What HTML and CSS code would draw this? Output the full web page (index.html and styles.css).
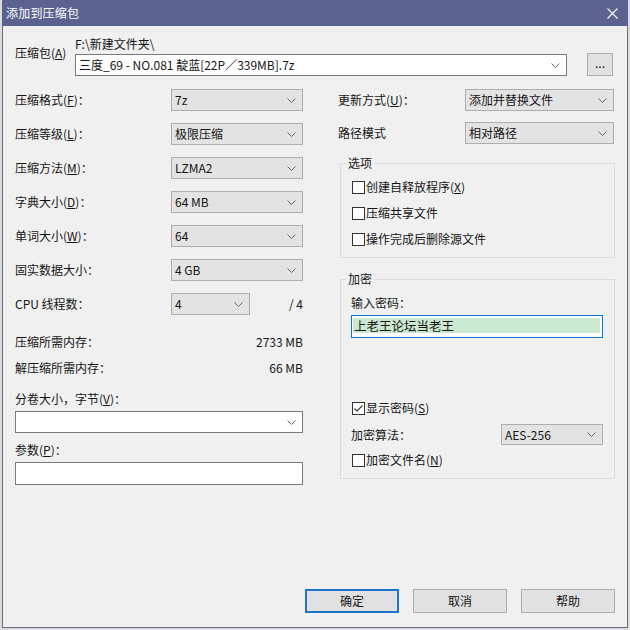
FILE: index.html
```html
<!DOCTYPE html>
<html lang="zh-CN">
<head>
<meta charset="utf-8">
<title>添加到压缩包</title>
<link rel="stylesheet" href="styles.css">
</head>
<body>
<div class="win">
  <div class="titlebar">
    <span class="title">添加到压缩包</span>
    <svg class="close" width="11" height="11" viewBox="0 0 11 11"><path d="M0.5 0.5L10.5 10.5M10.5 0.5L0.5 10.5" stroke="#ffffff" stroke-width="1.1" fill="none"/></svg>
  </div>
  <div class="content">
    <div class="archive">
      <div class="archive-label">压缩包(<u>A</u>)</div>
      <div class="archive-main">
        <div class="path">F:\新建文件夹\</div>
        <div class="combo edit">
          <span>三度_69 - NO.081 靛蓝[22P／339MB].7z</span>
          <svg class="chev" width="9" height="5" viewBox="0 0 9 5"><path d="M0.5 0.5L4.5 4.5L8.5 0.5" fill="none" stroke="#666" stroke-width="1"/></svg>
        </div>
      </div>
      <div class="btn browse">...</div>
    </div>

    <div class="columns">
      <div class="left">
        <div class="row"><span class="lbl">压缩格式(<u>F</u>)：</span><div class="combo sel"><span>7z</span><svg class="chev" width="9" height="5" viewBox="0 0 9 5"><path d="M0.5 0.5L4.5 4.5L8.5 0.5" fill="none" stroke="#666" stroke-width="1"/></svg></div></div>
        <div class="row"><span class="lbl">压缩等级(<u>L</u>)：</span><div class="combo sel"><span>极限压缩</span><svg class="chev" width="9" height="5" viewBox="0 0 9 5"><path d="M0.5 0.5L4.5 4.5L8.5 0.5" fill="none" stroke="#666" stroke-width="1"/></svg></div></div>
        <div class="row"><span class="lbl">压缩方法(<u>M</u>)：</span><div class="combo sel"><span>LZMA2</span><svg class="chev" width="9" height="5" viewBox="0 0 9 5"><path d="M0.5 0.5L4.5 4.5L8.5 0.5" fill="none" stroke="#666" stroke-width="1"/></svg></div></div>
        <div class="row"><span class="lbl">字典大小(<u>D</u>)：</span><div class="combo sel"><span>64 MB</span><svg class="chev" width="9" height="5" viewBox="0 0 9 5"><path d="M0.5 0.5L4.5 4.5L8.5 0.5" fill="none" stroke="#666" stroke-width="1"/></svg></div></div>
        <div class="row"><span class="lbl">单词大小(<u>W</u>)：</span><div class="combo sel"><span>64</span><svg class="chev" width="9" height="5" viewBox="0 0 9 5"><path d="M0.5 0.5L4.5 4.5L8.5 0.5" fill="none" stroke="#666" stroke-width="1"/></svg></div></div>
        <div class="row"><span class="lbl">固实数据大小：</span><div class="combo sel"><span>4 GB</span><svg class="chev" width="9" height="5" viewBox="0 0 9 5"><path d="M0.5 0.5L4.5 4.5L8.5 0.5" fill="none" stroke="#666" stroke-width="1"/></svg></div></div>
        <div class="row cpu"><span class="lbl">CPU 线程数：</span><div class="combo sel short"><span>4</span><svg class="chev" width="9" height="5" viewBox="0 0 9 5"><path d="M0.5 0.5L4.5 4.5L8.5 0.5" fill="none" stroke="#666" stroke-width="1"/></svg></div><span class="threads">/ 4</span></div>

        <div class="mem first"><span>压缩所需内存：</span><span>2733 MB</span></div>
        <div class="mem"><span>解压缩所需内存：</span><span>66 MB</span></div>

        <div class="flabel">分卷大小，字节(<u>V</u>)：</div>
        <div class="combo edit wide"><span></span><svg class="chev" width="9" height="5" viewBox="0 0 9 5"><path d="M0.5 0.5L4.5 4.5L8.5 0.5" fill="none" stroke="#666" stroke-width="1"/></svg></div>
        <div class="flabel second">参数(<u>P</u>)：</div>
        <div class="textbox"></div>
      </div>

      <div class="right">
        <div class="rrow first"><span class="rlbl">更新方式(<u>U</u>)：</span><div class="combo sel rsel"><span>添加并替换文件</span><svg class="chev" width="9" height="5" viewBox="0 0 9 5"><path d="M0.5 0.5L4.5 4.5L8.5 0.5" fill="none" stroke="#666" stroke-width="1"/></svg></div></div>
        <div class="rrow"><span class="rlbl">路径模式</span><div class="combo sel rsel"><span>相对路径</span><svg class="chev" width="9" height="5" viewBox="0 0 9 5"><path d="M0.5 0.5L4.5 4.5L8.5 0.5" fill="none" stroke="#666" stroke-width="1"/></svg></div></div>

        <fieldset class="group opts">
          <legend>选项</legend>
          <div class="cb"><span class="box"></span><span>创建自释放程序(<u>X</u>)</span></div>
          <div class="cb"><span class="box"></span><span>压缩共享文件</span></div>
          <div class="cb"><span class="box"></span><span>操作完成后删除源文件</span></div>
        </fieldset>

        <fieldset class="group enc">
          <legend>加密</legend>
          <div class="pwlabel">输入密码：</div>
          <div class="pw"><div class="sel-hl">上老王论坛当老王</div></div>
          <div class="cb small show"><span class="box"><svg width="11" height="11" viewBox="0 0 11 11"><path d="M1.5 5.5L4 8L9.5 2.5" fill="none" stroke="#333" stroke-width="1.1"/></svg></span><span>显示密码(<u>S</u>)</span></div>
          <div class="algo"><span>加密算法：</span><div class="combo sel asel"><span>AES-256</span><svg class="chev" width="9" height="5" viewBox="0 0 9 5"><path d="M0.5 0.5L4.5 4.5L8.5 0.5" fill="none" stroke="#666" stroke-width="1"/></svg></div></div>
          <div class="cb small names"><span class="box"></span><span>加密文件名(<u>N</u>)</span></div>
        </fieldset>
      </div>
    </div>

    <div class="buttons">
      <div class="btn act default">确定</div>
      <div class="btn act">取消</div>
      <div class="btn act">帮助</div>
    </div>
  </div>
</div>
</body>
</html>
```

FILE: styles.css
```css
* { box-sizing: border-box; }
html, body { margin: 0; padding: 0; }
body {
  width: 630px;
  height: 630px;
  overflow: hidden;
  background: #dcdcdc;
  font-family: "Noto Sans CJK SC", "Microsoft YaHei", sans-serif;
  font-size: 12px;
  line-height: 16px;
  color: #151515;
}
u { text-decoration: underline; text-underline-offset: 1px; }

.win {
  margin-left: 2px;
  width: 626px;
  height: 628px;
  display: flex;
  flex-direction: column;
}
.titlebar {
  height: 26px;
  flex: none;
  background: #5b628f;
  color: #fff;
  display: flex;
  align-items: center;
  justify-content: space-between;
  padding: 0 10px 0 4px;
}
.title { font-size: 12px; letter-spacing: 0.2px; }
.close { display: block; }

.content {
  flex: 1;
  background: #f0f0f0;
  border: 1px solid #6c6e80;
  border-top: none;
  padding: 10px 11px 14px 12px;
  display: flex;
  flex-direction: column;
}

.archive { display: flex; align-items: flex-start; }
.archive-label { width: 60px; margin-top: 9px; }
.archive-main { width: 492px; }
.path { height: 16px; }

.combo {
  display: flex;
  align-items: center;
  justify-content: space-between;
  height: 22px;
  padding: 0 6px 0 3px;
  white-space: nowrap;
}
.combo .chev { flex: none; display: block; }
.combo.edit {
  background: #fff;
  border: 1px solid #7a7a7a;
}
.archive .combo.edit { margin-top: 2px; padding-left: 3px; }

.btn {
  background: #e1e1e1;
  border: 1px solid #adadad;
  display: flex;
  align-items: center;
  justify-content: center;
}
.browse {
  margin-left: 20px;
  margin-top: 17px;
  width: 26px;
  height: 23px;
  padding-bottom: 3px;
}

.columns { display: flex; margin-top: 13px; }
.left { width: 288px; }
.right { width: 277px; margin-left: 35px; }

.row { display: flex; align-items: center; height: 22px; margin-bottom: 12px; }
.row.cpu { margin-bottom: 19px; }
.lbl { width: 156px; }
.combo.sel {
  width: 132px;
  background: #e3e3e3;
  border: 1px solid #adadad;
}
.combo.sel.short { width: 79px; }
.threads { margin-left: auto; }

.mem { display: flex; justify-content: space-between; height: 16px; }
.mem.first { margin-bottom: 10px; }

.flabel { margin-top: 15px; height: 16px; }
.flabel.second { margin-top: 9px; }
.combo.edit.wide { margin-top: 4px; width: 288px; }
.textbox {
  margin-top: 4px;
  height: 23px;
  background: #fff;
  border: 1px solid #7a7a7a;
}

.rrow { display: flex; align-items: center; height: 22px; }
.rrow.first { margin-bottom: 11px; }
.rlbl { width: 127px; }
.combo.rsel { width: 149px; }

.group {
  margin: 11px 0 0 2px;
  width: 275px;
  min-width: 0;
  border: 1px solid #dcdcdc;
  padding: 3px 10px 5px 10px;
}
.group legend {
  padding: 0 2px;
  margin-left: -5px;
  line-height: 16px;
}
.group.enc { margin-top: 13px; padding-top: 8px; padding-bottom: 8px; }

.cb { display: flex; align-items: center; height: 26px; }
.cb.small { height: 20px; }
.cb .box {
  width: 13px;
  height: 13px;
  margin: 0 1px 0 1px;
  background: #fff;
  border: 1px solid #333;
  flex: none;
  display: flex;
  align-items: center;
  justify-content: center;
}
.cb .box svg { display: block; }

.pwlabel { height: 16px; }
.pw {
  margin-top: 4px;
  width: 252px;
  height: 23px;
  background: #fff;
  border: 1px solid #0078d7;
  padding: 2px 2px 4px 1px;
}
.sel-hl {
  height: 15px;
  line-height: 15px;
  background: #cbe8d1;
  padding-left: 1px;
  font-size: 12.5px;
}
.cb.show { margin-top: 60px; }
.algo {
  margin-top: 6px;
  width: 252px;
  height: 21px;
  display: flex;
  align-items: center;
}
.combo.asel { margin-left: auto; width: 102px; height: 21px; }
.cb.names { margin-top: 5px; }

.buttons {
  margin-top: auto;
  display: flex;
  justify-content: flex-end;
  gap: 14px;
  padding-right: 1px;
}
.btn.act { width: 94px; height: 24px; }
.btn.default { border: 2px solid #1f73c8; }
```
